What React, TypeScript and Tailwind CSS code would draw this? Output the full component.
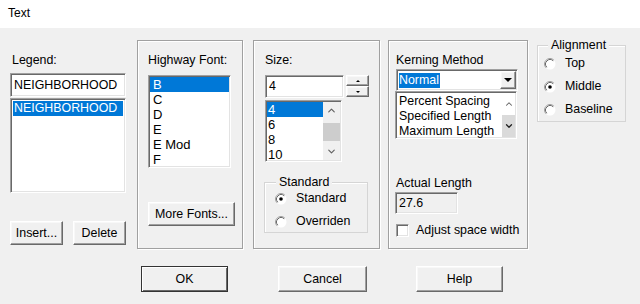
import { ChevronDown, ChevronUp } from "lucide-react";

const sunken =
  "border border-t-[#a0a0a0] border-l-[#a0a0a0] border-r-white border-b-white shadow-[inset_1px_1px_0_#696969,inset_-1px_-1px_0_#e3e3e3]";
const raised =
  "border border-t-white border-l-white border-r-[#696969] border-b-[#696969] shadow-[inset_-1px_-1px_0_#a0a0a0,inset_1px_1px_0_#f8f8f8]";
const etched =
  "border border-[#a0a0a0] shadow-[inset_1px_1px_0_#fff,1px_1px_0_#fff]";

function Radio({ checked }: { checked?: boolean }) {
  return (
    <svg width="12" height="12" viewBox="0 0 12 12" className="shrink-0">
      <circle cx="6" cy="6" r="5.5" fill="#fff" />
      <path d="M2.11 9.89 A5.5 5.5 0 0 1 9.89 2.11" stroke="#a0a0a0" fill="none" />
      <path d="M2.82 9.18 A4.5 4.5 0 0 1 9.18 2.82" stroke="#696969" fill="none" />
      {checked && <circle cx="6" cy="6" r="1.8" fill="#000" />}
    </svg>
  );
}

function RadioRow({ label, checked }: { label: string; checked?: boolean }) {
  return (
    <div className="flex h-[23px] items-center">
      <Radio checked={checked} />
      <span className="ml-[9px]">{label}</span>
    </div>
  );
}

function Group({ title, titleLeft, className, children }: { title: string; titleLeft: string; className: string; children: React.ReactNode }) {
  return (
    <div className={`relative border border-[#d5d5d5] shadow-[inset_1px_1px_0_#fff] ${className}`}>
      <span className={`absolute -top-[8px] bg-[#f0f0f0] px-[3px] ${titleLeft}`}>{title}</span>
      {children}
    </div>
  );
}

function Button({ label, def, className }: { label: string; def?: boolean; className: string }) {
  return (
    <div
      className={`flex items-center justify-center bg-[#f0f0f0] ${
        def
          ? "border border-[#333] shadow-[inset_1px_1px_0_#fff,inset_-1px_-1px_0_#696969]"
          : raised
      } ${className}`}
    >
      {label}
    </div>
  );
}

function ScrollTrack() {
  return (
    <div className="flex w-[17px] flex-col items-center bg-[#f0f0f0]">
      <div className="flex h-[17px] items-center justify-center">
        <ChevronUp size={11} strokeWidth={2.5} color="#606060" />
      </div>
      <div className="mt-[4px] h-[18px] w-[17px] bg-[#cdcdcd]" />
      <div className="mt-auto flex h-[17px] items-center justify-center">
        <ChevronDown size={11} strokeWidth={2.5} color="#606060" />
      </div>
    </div>
  );
}

export default function App() {
  return (
    <div className="h-[304px] w-[640px] overflow-hidden bg-[#f0f0f0] font-['Liberation_Sans',Arial,sans-serif] text-[12.4px] leading-[15px] text-black">
      <div className="h-[28px] bg-white pl-[8px] pt-[6px] text-[12px]">Text</div>

      <div className="flex items-start pl-[10px] pt-[12px]">
        {/* Legend column */}
        <div className="flex w-[116px] flex-col pt-[13px]">
          <div className="pl-[2px]">Legend:</div>
          <div className={`mt-[5px] flex h-[24px] items-center bg-white pl-[3px] ${sunken}`}>
            NEIGHBORHOOD
          </div>
          <div className={`mt-px h-[95px] bg-white p-[2px] ${sunken}`}>
            <div className="h-[15px] bg-[#0078d7] pl-[1px] text-white">NEIGHBORHOOD</div>
          </div>
          <div className="mt-[28px] flex gap-[10px]">
            <Button label="Insert..." className="h-[24px] w-[53px]" />
            <Button label="Delete" className="h-[24px] w-[53px]" />
          </div>
        </div>

        {/* Highway font */}
        <div className={`ml-[11px] flex h-[209px] w-[106px] flex-col pl-[10px] pt-[12px] ${etched}`}>
          <div>Highway Font:</div>
          <div className={`mt-[7px] h-[93px] w-[83px] overflow-hidden bg-white p-[1px] ${sunken}`}>
            {["B", "C", "D", "E", "E Mod", "F"].map((f, i) => (
              <div
                key={f}
                className={`h-[15px] pl-[3px] text-[13px] ${i === 0 ? "bg-[#0078d7] text-white" : ""}`}
              >
                {f}
              </div>
            ))}
          </div>
          <Button label="More Fonts..." className="mt-[34px] h-[24px] w-[87px]" />
        </div>

        {/* Size */}
        <div className={`ml-[10px] flex h-[209px] w-[127px] flex-col pl-[11px] pt-[12px] ${etched}`}>
          <div>Size:</div>
          <div className="mt-[7px] flex items-start">
            <div className={`flex h-[23px] w-[79px] items-center bg-white pl-[3px] ${sunken}`}>4</div>
            <div className="ml-[2px] flex h-[22px] w-[23px] flex-col">
              <div className={`flex h-[11px] items-center justify-center bg-[#f0f0f0] ${raised}`}>
                <div className="h-0 w-0 border-x-[2px] border-b-[2px] border-x-transparent border-b-black" />
              </div>
              <div className={`flex h-[11px] items-center justify-center bg-[#f0f0f0] ${raised}`}>
                <div className="h-0 w-0 border-x-[2px] border-t-[2px] border-x-transparent border-t-black" />
              </div>
            </div>
          </div>
          <div className={`mt-[2px] flex h-[62px] w-[77px] overflow-hidden bg-white p-[1px] ${sunken}`}>
            <div className="flex-1">
              {["4", "6", "8", "10"].map((s, i) => (
                <div key={s} className={`h-[15px] pl-[1px] text-[13px] ${i === 0 ? "bg-[#0078d7] text-white" : ""}`}>
                  {s}
                </div>
              ))}
            </div>
            <ScrollTrack />
          </div>
          <Group title="Standard" titleLeft="left-[11px]" className="-ml-px mt-[20px] h-[51px] w-[104px] pl-[10px] pt-[4px]">
            <RadioRow label="Standard" checked />
            <RadioRow label="Overriden" />
          </Group>
        </div>

        {/* Kerning */}
        <div className={`ml-[8px] flex h-[209px] w-[140px] flex-col pl-[7px] pt-[12px] ${etched}`}>
          <div>Kerning Method</div>
          <div className={`mt-px flex h-[22px] w-[122px] items-center bg-white pl-[2px] pr-[1px] ${sunken}`}>
            <span className="bg-[#0078d7] pr-[1px] text-white">Normal</span>
            <div className={`ml-auto flex h-[18px] w-[16px] items-center justify-center bg-[#f0f0f0] ${raised}`}>
              <div className="h-0 w-0 border-x-[4px] border-t-[4px] border-x-transparent border-t-black" />
            </div>
          </div>
          <div className={`-ml-px flex h-[48px] w-[122px] overflow-hidden bg-white p-[1px] ${sunken}`}>
            <div className="flex-1 whitespace-nowrap pl-[2px] pt-[1px]">
              <div className="h-[15px]">Percent Spacing</div>
              <div className="h-[15px]">Specified Length</div>
              <div className="h-[15px]">Maximum Length</div>
            </div>
            <div className="flex w-[13px] flex-col items-center">
              <div className="flex h-[22px] items-center justify-center">
                <ChevronUp size={10} strokeWidth={2.5} color="#606060" />
              </div>
              <div className="flex h-[22px] w-[13px] items-center justify-center bg-[#dadada]">
                <ChevronDown size={10} strokeWidth={3} color="#202020" />
              </div>
            </div>
          </div>
          <div className="mt-[37px]">Actual Length</div>
          <div className={`-ml-px mt-px flex h-[22px] w-[63px] items-center bg-[#f0f0f0] pl-[3px] ${sunken}`}>
            27.6
          </div>
          <div className="mt-[9px] flex items-center">
            <div className={`h-[13px] w-[13px] bg-white ${sunken}`} />
            <span className="ml-[7px]">Adjust space width</span>
          </div>
        </div>

        {/* Alignment */}
        <Group title="Alignment" titleLeft="left-[10px]" className="ml-[9px] mt-[5px] h-[77px] w-[89px] pl-[6px] pt-[6px]">
          <RadioRow label="Top" />
          <RadioRow label="Middle" checked />
          <RadioRow label="Baseline" />
        </Group>
      </div>

      <div className="flex pl-[141px] pt-[17px]">
        <Button label="OK" def className="h-[26px] w-[87px]" />
        <Button label="Cancel" className="ml-[50px] h-[26px] w-[89px]" />
        <Button label="Help" className="ml-[49px] h-[26px] w-[87px]" />
      </div>
    </div>
  );
}
